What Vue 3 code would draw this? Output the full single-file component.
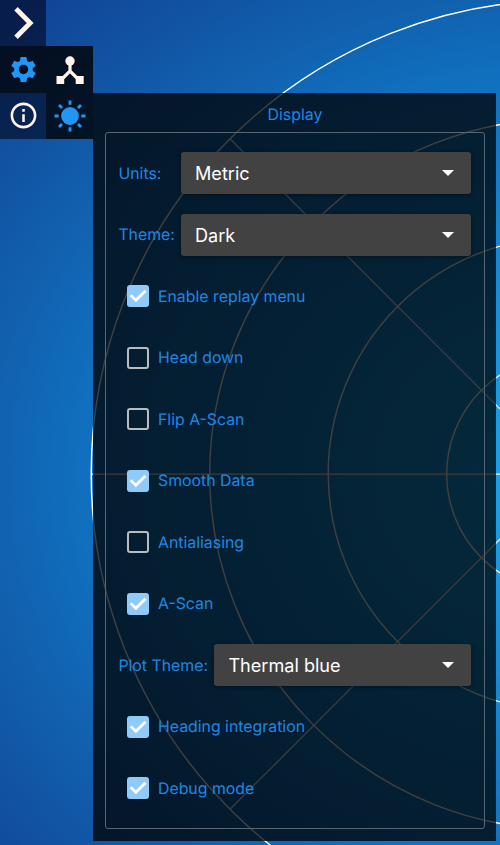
<script setup>
import { ref } from 'vue'

const rings = [118.5, 237, 355.5, 474]
const items = ref([
  { type: 'select', label: 'Units:', value: 'Metric', size: 'short' },
  { type: 'select', label: 'Theme:', value: 'Dark', size: 'short' },
  { type: 'check', label: 'Enable replay menu', on: true },
  { type: 'check', label: 'Head down', on: false },
  { type: 'check', label: 'Flip A-Scan', on: false },
  { type: 'check', label: 'Smooth Data', on: true },
  { type: 'check', label: 'Antialiasing', on: false },
  { type: 'check', label: 'A-Scan', on: true },
  { type: 'select', label: 'Plot Theme:', value: 'Thermal blue', size: 'long' },
  { type: 'check', label: 'Heading integration', on: true },
  { type: 'check', label: 'Debug mode', on: true },
])
</script>

<template>
  <main class="screen">
    <svg class="plot" width="500" height="845" viewBox="0 0 500 845">
      <g fill="none" stroke="#fff" stroke-width="1.4">
        <circle v-for="r in rings" :key="r" cx="565.2" cy="474" :r="r" />
        <path d="M91.5 474H565M230 138.8L565.2 474L230 809.2" stroke-width="1.25" stroke-opacity=".9" />
      </g>
    </svg>

    <nav class="rail">
      <button class="tile">
        <svg width="46" height="46" viewBox="0 0 46 46"><path d="M16 8.7L30.2 23L16 37.3" fill="none" stroke="#fff3ea" stroke-width="4.8" /></svg>
      </button>
      <div class="pair">
        <button class="tile active">
          <svg width="31" height="31" viewBox="0 0 24 24"><path fill="#2196f3" d="M19.14 12.94c.04-.3.06-.61.06-.94s-.02-.64-.07-.94l2.03-1.58c.18-.14.23-.41.12-.61l-1.92-3.32c-.12-.22-.37-.29-.59-.22l-2.39.96c-.5-.38-1.03-.7-1.62-.94L14.4 2.81c-.04-.24-.24-.41-.48-.41h-3.84c-.24 0-.43.17-.47.41l-.36 2.54c-.59.24-1.13.57-1.62.94l-2.39-.96c-.22-.08-.47 0-.59.22L2.74 8.87c-.12.21-.08.47.12.61l2.03 1.58c-.05.3-.09.63-.09.94s.02.64.07.94l-2.03 1.58c-.18.14-.23.41-.12.61l1.92 3.32c.12.22.37.29.59.22l2.39-.96c.5.38 1.03.7 1.62.94l.36 2.54c.05.24.24.41.48.41h3.84c.24 0 .44-.17.47-.41l.36-2.54c.59-.24 1.13-.56 1.62-.94l2.39.96c.22.08.47 0 .59-.22l1.92-3.32c.12-.22.07-.47-.12-.61l-2.01-1.58zM12 15.6c-1.98 0-3.6-1.62-3.6-3.6s1.62-3.6 3.6-3.6 3.6 1.62 3.6 3.6-1.62 3.6-3.6 3.6z" /></svg>
        </button>
        <button class="tile active">
          <svg width="46" height="46" viewBox="0 0 46 46">
            <circle cx="23" cy="14" r="4.7" fill="#fff3ea" />
            <path d="M23 14V24M13 34L23 24L33 34" fill="none" stroke="#fff3ea" stroke-width="3.2" />
            <path d="M9.5 29h7.7v8H9.5zM28.7 29h8v8h-8z" fill="#fff3ea" />
          </svg>
        </button>
      </div>
      <div class="pair">
        <button class="tile">
          <svg width="31" height="31" viewBox="0 0 24 24"><path fill="#fff3ea" d="M11 7h2v2h-2zm0 4h2v6h-2zm1-9C6.48 2 2 6.48 2 12s4.48 10 10 10 10-4.48 10-10S17.52 2 12 2zm0 18c-4.41 0-8-3.59-8-8s3.59-8 8-8 8 3.59 8 8-3.59 8-8 8z" /></svg>
        </button>
        <button class="tile active">
          <svg width="46" height="46" viewBox="0 0 46 46">
            <circle cx="23" cy="23" r="8.9" fill="#2196f3" />
            <path d="M23 7.5v4.2M23 34.3v4.2M7.5 23h4.2M34.3 23h4.2M12 12l3 3M31 31l3 3M34 12l-3 3M15 31l-3 3" stroke="#2196f3" stroke-width="2.9" />
          </svg>
        </button>
      </div>
    </nav>

    <section class="panel">
      <h1>Display</h1>
      <div class="group">
        <div v-for="item in items" :key="item.label" class="row" :class="item.type">
          <template v-if="item.type === 'select'">
            <span class="label" :class="item.size">{{ item.label }}</span>
            <button class="combo">
              <span>{{ item.value }}</span>
              <svg width="12" height="6" viewBox="0 0 12 6"><path d="M0 0H12L6 6Z" fill="#fff" /></svg>
            </button>
          </template>
          <label v-else class="option" @click="item.on = !item.on">
            <span class="box" :class="{ on: item.on }">
              <svg v-if="item.on" width="22" height="22" viewBox="0 0 22 22"><path d="M3.7 10.3L8.9 15.2L18.5 5.7" fill="none" stroke="#fff" stroke-width="2.8" /></svg>
            </span>
            <span>{{ item.label }}</span>
          </label>
        </div>
      </div>
    </section>
  </main>
</template>

<style>
body { margin: 0; }
</style>

<style scoped>
.screen {
  position: relative;
  width: 500px;
  height: 845px;
  overflow: hidden;
  box-sizing: border-box;
  font-family: Inter, sans-serif;
  text-rendering: geometricPrecision;
  background: radial-gradient(ellipse 800px 670px at 565px 474px, #17a8f3 0%, #1070bf 60%, #1162b0 71%, #114f9f 87%, #133f93 100%);
}
.plot { position: absolute; inset: 0; }
.rail { position: relative; display: flex; flex-direction: column; align-items: flex-start; }
.pair { display: flex; }
button { border: 0; padding: 0; font: inherit; color: inherit; }
.tile { width: 46.36px; height: 46.36px; display: flex; align-items: center; justify-content: center; background: rgba(0, 4, 22, 0.58); }
.tile svg { display: block; }
.tile.active { background: rgba(0, 0, 0, 0.78); }
.panel {
  position: absolute;
  left: 93px;
  top: 93px;
  width: 403px;
  height: 748px;
  box-sizing: border-box;
  padding: 0 11px 12px 12px;
  display: flex;
  flex-direction: column;
  background: rgba(0, 0, 0, 0.75);
  color: #1e88e5;
}
h1 { margin: 0; height: 39px; line-height: 44px; font-size: 15.9px; font-weight: 400; text-align: center; }
.group { flex: 1; box-sizing: border-box; border: 1px solid #586673; border-radius: 3px; padding: 9.5px 13px 0 12.4px; }
.row { height: 61.5px; display: flex; align-items: center; font-size: 15.85px; white-space: nowrap; }
.label.short { width: 62.6px; }
.label.long { width: 96px; }
.combo {
  flex: 1;
  height: 42px;
  display: flex;
  align-items: center;
  justify-content: space-between;
  padding: 0 17px 0 14px;
  border-radius: 3px;
  background: #424242;
  color: #fff;
  font-size: 18.1px;
  box-shadow: 0 1px 4px rgba(0, 0, 0, 0.45);
}
.option { display: flex; align-items: center; gap: 9px; padding-left: 8.6px; }
.box { width: 22px; height: 22px; box-sizing: border-box; border: 2px solid #b9bcc0; border-radius: 3px; }
.box.on { border: 0; background: #90caf9; }
.box svg { display: block; }
</style>
